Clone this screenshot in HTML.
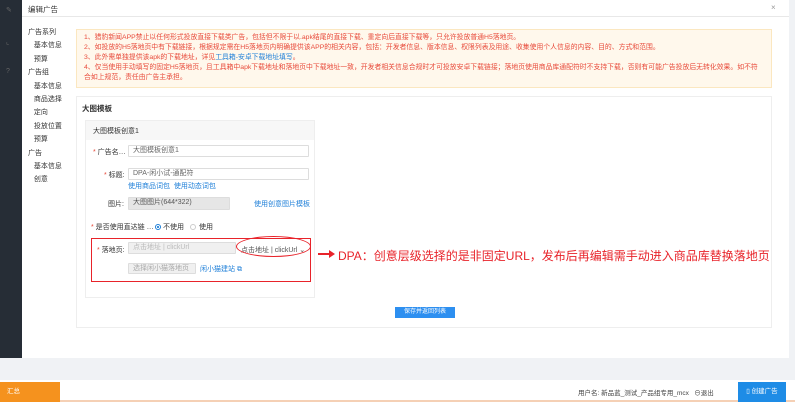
<!DOCTYPE html>
<html><head><meta charset="utf-8"><style>
*{margin:0;padding:0;box-sizing:border-box}
body{width:795px;height:402px;background:#f0f2f5;position:relative;overflow:hidden;font-family:"Liberation Sans","Noto Sans CJK SC",sans-serif;font-size:7px;color:#333}
.a{position:absolute;white-space:nowrap}
.red{color:#e84a3a}
.blue{color:#1e7fd8}
.inp{position:absolute;border:1px solid #ddd;background:#fff;height:12px;font-size:7px;line-height:10px;padding-left:4px;color:#666;border-radius:1px}
.dis{background:#f0f0f0;color:#aaa}
.star{color:#e84a3a}
</style></head><body>
<div class="a" style="left:0;top:0;width:22px;height:358px;background:#262d36"></div>
<div class="a" style="left:6px;top:6px;color:#666;font-size:7px">✎</div>
<div class="a" style="left:6px;top:38px;color:#666;font-size:7px">⌞</div>
<div class="a" style="left:6px;top:68px;color:#666;font-size:7px">?</div>
<div class="a" style="left:22px;top:0;width:767px;height:358px;background:#fff"></div>
<div class="a" style="left:22px;top:16px;width:767px;height:1px;background:#e8e8e8"></div>
<div class="a" style="left:28px;top:4px;font-size:7.5px">编辑广告</div>
<div class="a" style="left:771px;top:3px;color:#999;font-size:8px">×</div>
<div class="a" style="left:28px;top:26px;line-height:13.4px;font-size:7px">广告系列<br>&nbsp;&nbsp;&nbsp;基本信息<br>&nbsp;&nbsp;&nbsp;预算<br>广告组<br>&nbsp;&nbsp;&nbsp;基本信息<br>&nbsp;&nbsp;&nbsp;商品选择<br>&nbsp;&nbsp;&nbsp;定向<br>&nbsp;&nbsp;&nbsp;投放位置<br>&nbsp;&nbsp;&nbsp;预算<br>广告<br>&nbsp;&nbsp;&nbsp;基本信息<br>&nbsp;&nbsp;&nbsp;创意</div>
<div class="a red" style="left:76px;top:29px;width:696px;height:59px;background:#fff8ec;border:1px solid #fbe7c0;padding:3px 0 0 7px;line-height:10px;font-size:6.85px">1、猎豹新闻APP禁止以任何形式投放直接下载类广告，包括但不限于以.apk结尾的直接下载、重定向后直接下载等，只允许投放普通H5落地页。<br>2、如投放的H5落地页中有下载链接，根据规定需在H5落地页内明确提供该APP的相关内容，包括：开发者信息、版本信息、权限列表及用途、收集使用个人信息的内容、目的、方式和范围。<br>3、此外需单独提供该apk的下载地址，详见<span class="blue">工具箱-安卓下载地址填写</span>。<br>4、仅当使用手动填写的固定H5落地页，且工具箱中apk下载地址和落地页中下载地址一致，开发者相关信息合规时才可投放安卓下载链接；落地页使用商品库通配符时不支持下载，否则有可能广告投放后无转化效果。如不符<br>合如上规范，责任由广告主承担。</div>
<div class="a" style="left:76px;top:96px;width:696px;height:232px;border:1px solid #eee"></div>
<div class="a" style="left:82px;top:103px;font-size:7.5px;font-weight:bold">大图模板</div>
<div class="a" style="left:85px;top:120px;width:230px;height:178px;border:1px solid #eee"></div>
<div class="a" style="left:86px;top:121px;width:228px;height:19px;background:#f7f7f7"></div>
<div class="a" style="left:93px;top:126px">大图模板创意1</div>
<div class="a" style="left:93px;top:147px"><span class="star">*</span> 广告名…</div>
<div class="inp" style="left:128px;top:145px;width:181px">大图模板创意1</div>
<div class="a" style="left:104px;top:170px"><span class="star">*</span> 标题:</div>
<div class="inp" style="left:128px;top:168px;width:181px">DPA-闲小试-通配符</div>
<div class="a blue" style="left:128px;top:181px">使用商品词包 &nbsp;使用动态词包</div>
<div class="a" style="left:108px;top:199px">图片:</div>
<div class="inp dis" style="left:128px;top:197px;width:102px;height:13px;background:#e6e6e6;color:#555;border-color:#ddd">大图图片(644*322)</div>
<div class="a blue" style="left:254px;top:199px">使用创意图片模板</div>
<div class="a" style="left:91px;top:222px"><span class="star">*</span> 是否使用直达链 …</div>
<div class="a" style="left:155px;top:224px;width:6px;height:6px;border-radius:50%;border:1px solid #1e7fd8;background:radial-gradient(#1e7fd8 35%,#fff 40%)"></div>
<div class="a" style="left:163px;top:222px">不使用</div>
<div class="a" style="left:190px;top:224px;width:6px;height:6px;border-radius:50%;border:1px solid #ccc"></div>
<div class="a" style="left:199px;top:222px">使用</div>
<div class="a" style="left:91px;top:238px;width:220px;height:44px;border:1.5px solid #e8232a"></div>
<div class="a" style="left:97px;top:245px"><span class="star">*</span> 落地页:</div>
<div class="inp dis" style="left:128px;top:242px;width:108px;height:12px;color:#bbb">点击地址 | clickUrl</div>
<div class="a" style="left:241px;top:245px;color:#555">点击地址 | clickUrl ⌄</div>
<div class="a" style="left:236px;top:236px;width:75px;height:21px;border:1.5px solid #e8232a;border-radius:50%"></div>
<div class="inp dis" style="left:128px;top:263px;width:68px;height:11px;color:#aaa">选择闲小猫落地页</div>
<div class="a blue" style="left:200px;top:264px">闲小猫建站 ⧉</div>
<div class="a" style="left:318px;top:253px;width:12px;height:2px;background:#e8232a"></div>
<div class="a" style="left:329px;top:250px;width:0;height:0;border-left:6px solid #e8232a;border-top:4px solid transparent;border-bottom:4px solid transparent"></div>
<div class="a" style="left:338px;top:247px;font-size:12px;color:#e8232a">DPA：创意层级选择的是非固定URL，发布后再编辑需手动进入商品库替换落地页</div>
<div class="a" style="left:395px;top:307px;width:60px;height:11px;background:#2d8ff0;color:#fff;font-size:6px;text-align:center;line-height:11px">保存并返回列表</div>
<div class="a" style="left:0;top:380px;width:795px;height:22px;background:#fff;border-bottom:2px solid #f5d0b5"></div>
<div class="a" style="left:0;top:382px;width:60px;height:20px;background:#f5921e;color:#fff;font-size:6.5px;line-height:20px;padding-left:7px">汇总</div>
<div class="a" style="left:578px;top:387px;font-size:6.5px;color:#444">用户名: 新品蓝_测试_产品组专用_mcx &nbsp;&nbsp;⊖退出</div>
<div class="a" style="left:738px;top:382px;width:48px;height:20px;background:#1e8ce6;color:#fff;font-size:6.5px;line-height:20px;text-align:center">▯ 创建广告</div>
</body></html>
